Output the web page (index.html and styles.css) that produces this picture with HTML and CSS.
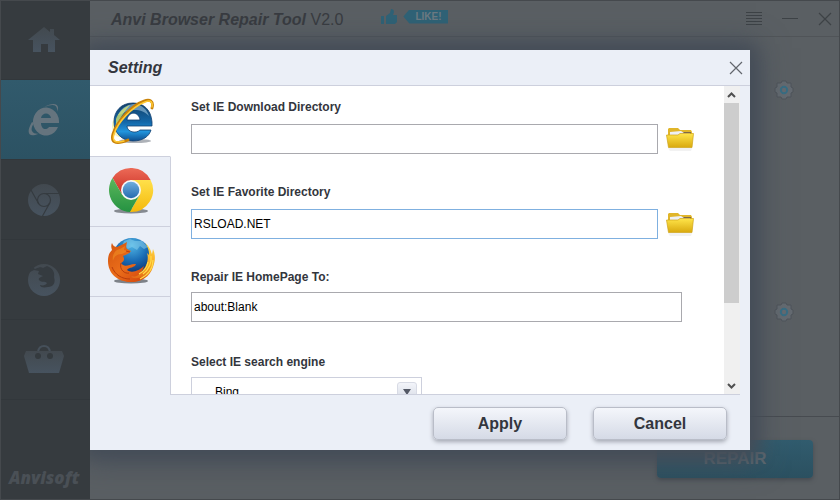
FILE: index.html
```html
<!DOCTYPE html>
<html lang="en">
<head>
<meta charset="utf-8">
<title>Anvi Browser Repair Tool</title>
<link rel="stylesheet" href="styles.css">
</head>
<body>
<div class="window">
  <nav class="sidebar" aria-label="Sections">
    <button class="nav-item" aria-label="Home">
      <svg width="34" height="28" viewBox="0 0 34 28"><path fill="url(#steel)" d="M17 1 1 14h5v12h8v-8h7v8h7V14h5l-6-5V3h-4v3z"/></svg>
    </button>
    <button class="nav-item nav-item-active" aria-label="Internet Explorer">
      <svg width="34" height="34" viewBox="0 0 34 34" fill="#65747e">
        <path fill-rule="evenodd" d="M32 20v-2A13 14 0 1 0 31 24H22C19 28 14 26 14 20ZM14 15C15 9 23 9 24 15Z"/>
        <path d="M30 9C34 0 26-1 17 4 27 0 31 2 30 9ZM5 19C-1 29 1 35 11 31 17 29 7 33 5 28 4 26 5 23 7 20Z"/>
      </svg>
    </button>
    <button class="nav-item" aria-label="Chrome">
      <svg width="34" height="34" viewBox="0 0 34 34"><circle cx="17" cy="17" r="16" fill="url(#steel)"/><g fill="none" stroke="#353b40" stroke-width="1.2"><circle cx="17" cy="17" r="6.5"/><path d="M17 10.500H32M11.400 20.200 4 7M22.600 20.200 15.500 33"/></g></svg>
    </button>
    <button class="nav-item" aria-label="Firefox">
      <svg width="34" height="34" viewBox="0 0 34 34"><circle cx="17" cy="17" r="16" fill="url(#steel)"/><path fill="#353b40" d="M4 3 8 6C12 4 15 4 16 5L20 3C26 5 28 10 27 14 29 20 26 24 21 24 16 25 13 24 13 22 16 23 19 22 20 20 18 18 15 20 12 17 11 15 14 14 16 13L11 11 12 8 7 7 3 9Z"/></svg>
    </button>
    <button class="nav-item" aria-label="Toolbox">
      <svg width="42" height="34" viewBox="0 0 42 34"><path fill="none" stroke="#46505a" stroke-width="2" d="M15 9C16 1 26 1 27 9"/><path fill="url(#steel)" d="M3 8H39L41 13 36 30H6L1 13Z"/><circle cx="15" cy="13" r="3" fill="#343a3e"/><circle cx="27" cy="13" r="3" fill="#343a3e"/></svg>
    </button>
    <div class="brand">Anvisoft</div>
  </nav>

  <main class="main">
    <header class="titlebar">
      <h1 class="app-name"><em>Anvi Browser Repair Tool</em> <span class="version">V2.0</span></h1>
      <a class="like" href="#like">
        <svg width="17" height="16" viewBox="0 0 17 16" fill="#2f6276"><path d="M0 7h3v8H0zM5 7 9 4 10 0C14 0 13 4 12 6H16V13L14 15H5Z"/></svg>
        <span class="like-tag">LIKE!</span>
      </a>
      <div class="window-controls">
        <button class="icon-button" aria-label="Menu"><svg width="16" height="14" viewBox="0 0 16 14" stroke="#3d4246"><path d="M0 .5H16M0 3.500H16M0 6.500H16M0 9.500H16M0 12.500H16"/></svg></button>
        <button class="icon-button" aria-label="Minimize"><svg width="16" height="14" viewBox="0 0 16 14" stroke="#3d4246"><path d="M0 6.500H16"/></svg></button>
        <button class="icon-button" aria-label="Close"><svg width="14" height="14" viewBox="0 0 14 14" stroke="#3d4246" stroke-width="1.200"><path d="M1 1 13 13M13 1 1 13"/></svg></button>
      </div>
    </header>
    <div class="sections">
      <section class="section"><button class="icon-button" aria-label="Repair options"><svg width="20" height="20" viewBox="0 0 20 20"><use href="#gear"/></svg></button></section>
      <section class="section"><button class="icon-button" aria-label="Setting options"><svg width="20" height="20" viewBox="0 0 20 20"><use href="#gear"/></svg></button></section>
    </div>
    <footer class="actions"><button class="repair">REPAIR</button></footer>
  </main>

  <div class="dialog" role="dialog" aria-labelledby="dialog-title">
    <header class="dialog-header">
      <h2 class="dialog-title" id="dialog-title">Setting</h2>
      <button class="icon-button" aria-label="Close settings"><svg width="14" height="14" viewBox="0 0 14 14" stroke="#62666d" stroke-width="1.200"><path d="M1 1 13 13M13 1 1 13"/></svg></button>
    </header>
    <div class="dialog-body">
      <div class="tabs" role="tablist">
        <button class="tab tab-active" role="tab" aria-selected="true" aria-label="Internet Explorer">
          <svg width="48" height="48" viewBox="0 0 48 48">
            <ellipse cx="27" cy="43" rx="16" ry="2" fill="#8b929a" opacity=".7"/>
            <ellipse cx="11" cy="28" rx="7" ry="11" fill="#f4ef8a" opacity=".6"/>
            <path fill="url(#ieblue)" stroke="#123f70" stroke-width=".8" fill-rule="evenodd" d="M44 28V24C43 11 35 5 25 5 13 5 6 13 6 24 6 35 14 43 25 43 34 43 41 39 43 32H32C28 36 19 34 19 28ZM19 22C20 13 31 13 32 22Z"/>
            <path fill="#b9dff5" opacity=".5" d="M10 17C14 8 22 6 27 6 35 7 39 12 41 18 35 12 30 12 25 12 18 12 14 17 10 17Z"/>
            <path fill="#dce96b" opacity=".75" d="M8 21C10 15 16 9 22 7 16 14 11 21 8 29Z"/>
            <path fill="none" stroke="#c98208" stroke-width="2.800" stroke-linecap="round" d="M44 10C46 3 42 1 36 3 24 7 9 23 5 36 3 43 6 48 20 42"/>
            <path fill="none" stroke="#ffc933" stroke-width="1.500" stroke-linecap="round" d="M44 9C45 3 42 2 37 4 24 9 10 24 6 36 4 42 6 46 16 43"/>
          </svg>
        </button>
        <button class="tab" role="tab" aria-selected="false" aria-label="Chrome">
          <svg width="48" height="48" viewBox="-24 -24 48 48">
            <ellipse cx="0" cy="21" rx="17" ry="2.500" fill="#6b7077" opacity=".8"/>
            <path fill="url(#cred)" d="M-18.460-11.970A22 22 0 0 1 19.600-10H0L-8.660 5Z"/>
            <path fill="url(#cyellow)" d="M19.600-10A22 22 0 0 1-1.140 21.970L8.660 5 0-10Z"/>
            <path fill="url(#cgreen)" d="M-1.140 21.970A22 22 0 0 1-18.460-11.970L-8.660 5H8.660Z"/>
            <circle r="10" fill="#f7f8f8"/><circle r="8.300" fill="url(#cblue)"/>
          </svg>
        </button>
        <button class="tab" role="tab" aria-selected="false" aria-label="Firefox">
          <svg width="48" height="48" viewBox="0 0 48 48">
            <ellipse cx="24" cy="45" rx="17" ry="2.500" fill="#62666d" opacity=".8"/>
            <circle cx="25" cy="21" r="19" fill="url(#globe)"/>
            <path fill="#8bd3ef" opacity=".5" d="M17 5 23 3 28 5 35 5 41 11 37 13 33 10 30 14 25 11 21 13 16 8Z"/>
            <path fill="url(#foxgold)" d="M38 7C44 12 44 16 45 18L46 13C49 20 48 26 46 31 43 41 34 46 24 46 18 46 13 43 10 38 20 43 29 41 34 36 40 31 42 23 40 17L42 19C42 14 41 11 38 7Z"/>
            <path fill="url(#fox)" d="M5 7C6 10 8 11 10 11 14 9 17 8 20 6 19 10 19 12 20 13L24 15C22 18 18 19 16 20 18 23 17 26 14 27 18 33 23 27 29 28 28 32 22 31 20 34 25 38 33 34 37 30 35 38 30 41 24 41 30 44 37 41 42 36 37 44 31 46 24 46 10 46 1 37 1 25 1 20 2 17 5 14 4 11 4 9 5 7Z"/>
            <path fill="#ffb02e" d="M10 14C14 13 16 11 18 10L17 14 21 15 15 18C9 18 7 21 6 25 5 20 7 16 10 14Z" opacity=".35"/>
            <path fill="none" stroke="#ffdc4a" stroke-width="1.200" d="M44 20C45 28 41 34 36 38M41 26C40 32 36 36 32 38M46 24C46 32 41 39 33 43"/>
            <path fill="none" stroke="#b83d0c" stroke-width="1" d="M14 27C12 34 18 38 22 37M19 15 23 16M5 31C8 39 15 43 23 43"/>
          </svg>
        </button>
      </div>
      <div class="pane">
        <form class="settings" id="settings">
          <div class="field">
            <label for="download">Set IE Download Directory</label>
            <div class="field-row">
              <input class="text-input" id="download" type="text">
              <button class="icon-button" type="button" aria-label="Browse download directory"><svg width="30" height="30" viewBox="0 0 30 30"><use href="#folder"/></svg></button>
            </div>
          </div>
          <div class="field">
            <label for="favorite">Set IE Favorite Directory</label>
            <div class="field-row">
              <input class="text-input text-input-current" id="favorite" type="text" value="RSLOAD.NET">
              <button class="icon-button" type="button" aria-label="Browse favorite directory"><svg width="30" height="30" viewBox="0 0 30 30"><use href="#folder"/></svg></button>
            </div>
          </div>
          <div class="field field-compact">
            <label for="homepage">Repair IE HomePage To:</label>
            <input class="text-input text-input-wide" id="homepage" type="text" value="about:Blank">
          </div>
          <div class="field field-compact">
            <label for="engine">Select IE search engine</label>
            <div class="select-box">
              <select id="engine"><option>Bing</option></select>
              <span class="select-arrow"></span>
            </div>
          </div>
        </form>
        <div class="scrollbar" aria-hidden="true">
          <svg width="15" height="17" viewBox="0 0 15 17"><path fill="none" stroke="#505050" stroke-width="2" d="M4 11 7.500 7.500 11 11"/></svg>
          <div class="scroll-thumb"></div>
          <svg width="15" height="17" viewBox="0 0 15 17"><path fill="none" stroke="#505050" stroke-width="2" d="M4 7 7.500 10.500 11 7"/></svg>
        </div>
      </div>
    </div>
    <footer class="dialog-footer">
      <button class="button" form="settings" type="button">Apply</button>
      <button class="button" type="button">Cancel</button>
    </footer>
  </div>
</div>

<svg class="defs" width="0" height="0" aria-hidden="true">
  <defs>
    <linearGradient id="steel" x2="0" y2="1"><stop stop-color="#42494f"/><stop offset="1" stop-color="#47535f"/></linearGradient>
    <linearGradient id="ieblue" x2="0" y2="1"><stop stop-color="#123f66"/><stop offset=".5" stop-color="#1467a8"/><stop offset=".75" stop-color="#2295dd"/><stop offset="1" stop-color="#0d4c8c"/></linearGradient>
    <linearGradient id="cred" x2="0" y2="1"><stop stop-color="#ec6a57"/><stop offset="1" stop-color="#ca2d22"/></linearGradient>
    <linearGradient id="cyellow" x2="0" y2="1"><stop stop-color="#ffe04a"/><stop offset="1" stop-color="#f4b90b"/></linearGradient>
    <linearGradient id="cgreen" x2="0" y2="1"><stop stop-color="#5bb75b"/><stop offset="1" stop-color="#259242"/></linearGradient>
    <linearGradient id="cblue" x2="0" y2="1"><stop stop-color="#70aede"/><stop offset="1" stop-color="#246baf"/></linearGradient>
    <radialGradient id="globe" cx=".5" cy=".2" r=".8"><stop stop-color="#4fb4e4"/><stop offset=".5" stop-color="#1b6db5"/><stop offset="1" stop-color="#0b2b69"/></radialGradient>
    <linearGradient id="fox" x2="1" y2="1"><stop stop-color="#d2540f"/><stop offset=".5" stop-color="#ea6d1a"/><stop offset="1" stop-color="#cf3f0b"/></linearGradient>
    <linearGradient id="foxgold" x2="0" y2="1"><stop stop-color="#ffdb48"/><stop offset=".6" stop-color="#f8a41e"/><stop offset="1" stop-color="#dc5614"/></linearGradient>
    <linearGradient id="gold" x2="0" y2="1"><stop stop-color="#ffe54a"/><stop offset="1" stop-color="#d9a90e"/></linearGradient>
    <g id="folder">
      <path fill="#e9e9e9" d="M3 24H27L26 27H5Z" opacity=".6"/>
      <path fill="#e0b52a" d="M3 5 4 4H13L15 6H26L27 8V17H3Z"/>
      <path fill="#7d6848" d="M5 8H26V13H5Z"/>
      <path fill="#eef0f4" d="M5 8 16 7 19 9H25V13H5Z"/>
      <path fill="url(#gold)" stroke="#cfa318" stroke-width=".7" d="M1.500 11H13L15 9.500H28.500L27 23.500H3.500Z"/>
    </g>
    <g id="gear">
      <path fill="#646a70" stroke="#4e545a" d="M8 1H12L13 3 17 3V7L19 8V12L17 13V17H13L12 19H8L7 17H3V13L1 12V8L3 7V3H7Z"/>
      <circle cx="10" cy="10" r="3.200" fill="none" stroke="#386d83" stroke-width="2"/>
    </g>
  </defs>
</svg>
</body>
</html>
```
FILE: styles.css
```css
* { box-sizing: border-box; }

body {
  margin: 0;
  font-family: "Liberation Sans", Arial, sans-serif;
  color: #33363d;
}

button {
  margin: 0;
  padding: 0;
  border: 0;
  background: none;
  font: inherit;
  color: inherit;
}

svg { display: block; flex: none; }
.defs { position: absolute; }
h1, h2 { margin: 0; font-size: 16px; line-height: 20px; }

.window {
  position: relative;
  display: flex;
  min-height: 100vh;
  border: 1px solid #45494d;
  background: #5a5f63;
  overflow: hidden;
}

.sidebar {
  position: relative;
  z-index: 2;
  display: flex;
  flex: none;
  flex-direction: column;
  width: 89px;
  background: #363b3f;
}

.nav-item {
  display: flex;
  align-items: center;
  justify-content: center;
  height: 80px;
  padding-right: 4px;
  border-bottom: 1px solid #32373b;
}

.nav-item:first-child { height: 79px; }
.nav-item-active { background: linear-gradient(#315a6c, #2c5263); }

.brand {
  margin: auto 0 10px 8px;
  font-family: "Open Sans", sans-serif;
  font-size: 17px;
  font-style: italic;
  font-weight: 800;
  line-height: 22px;
  color: #4a5056;
}

.main {
  display: flex;
  flex: 1;
  flex-direction: column;
}

.titlebar {
  display: flex;
  align-items: center;
  height: 36px;
  padding: 0 7px 0 21px;
  border-bottom: 1px solid #505458;
}

.app-name { margin-top: 2px; color: #383b40; }
.version { font-weight: 400; }

.like {
  display: flex;
  align-items: center;
  gap: 5px;
  margin: 0 auto 4px 38px;
  text-decoration: none;
}

.like-tag {
  padding: 0 7px 0 12px;
  background: #2f6276;
  clip-path: polygon(0 50%, 6px 0, 100% 0, 100% 100%, 6px 100%);
  font-size: 10px;
  font-weight: 700;
  line-height: 14px;
  color: #6c7a82;
}

.window-controls { display: flex; gap: 20px; }

.sections { flex: 1; }

.section {
  display: flex;
  align-items: flex-start;
  justify-content: flex-end;
  height: 222px;
  padding: 43px 45px 0;
}

.section + .section { height: auto; }

.actions {
  display: flex;
  justify-content: flex-end;
  height: 83px;
  padding: 23px 26px 0;
  border-top: 1px solid #474b50;
}

.repair {
  width: 156px;
  height: 38px;
  border-radius: 4px;
  background: linear-gradient(#315c6e, #2b5060);
  box-shadow: 0 2px 4px #454a50;
  font-size: 17px;
  font-weight: 700;
  color: #5e6a72;
}

.dialog {
  position: absolute;
  inset: 49px 89px;
  z-index: 1;
  display: flex;
  flex-direction: column;
  background: #ebeff7;
  box-shadow: 0 0 16px 6px #454d58, 0 4px 30px 6px #454d58;
}

.dialog-header {
  display: flex;
  align-items: center;
  justify-content: space-between;
  height: 36px;
  padding: 0 7px 0 18px;
  border-bottom: 1px solid #cdd0dd;
}

.dialog-title { font-style: italic; }

.dialog-body {
  display: flex;
  flex: 1;
  min-height: 0;
  padding-right: 10px;
}

.tabs {
  display: flex;
  flex: none;
  flex-direction: column;
  width: 81px;
}

.tabs::after {
  content: "";
  flex: 1;
  border-right: 1px solid #cdd0dd;
}

.tab {
  display: flex;
  align-items: center;
  justify-content: center;
  height: 70px;
  padding: 0 0 3px 2px;
  border-right: 1px solid #cdd0dd;
  border-bottom: 1px solid #cdd0dd;
}

.tab-active {
  height: 71px;
  padding: 2px 0 0 4px;
  border-right-color: #fff;
  background: #fff;
}

.pane {
  display: flex;
  flex: 1;
  min-width: 0;
  border-bottom: 1px solid #cdd0dd;
  background: #fff;
}

.settings {
  display: flex;
  flex: 1;
  flex-direction: column;
  gap: 30px;
  padding: 13px 42px 0 20px;
  overflow: hidden;
}

.field {
  display: flex;
  flex: none;
  flex-direction: column;
  gap: 9px;
  min-height: 55px;
}

.field-compact { gap: 7px; }

.field label {
  font-size: 12px;
  font-weight: 700;
  line-height: 16px;
}

.field-row {
  display: flex;
  gap: 7px;
  margin-right: -13px;
}

.text-input {
  flex: 1;
  min-width: 0;
  height: 30px;
  padding: 0 2px;
  border: 1px solid #a9a9ae;
  border-radius: 0;
  outline: 0;
  background: #fff;
  font: 12px "Liberation Sans", Arial, sans-serif;
  color: #000;
}

.text-input-wide { flex: none; }
.text-input-current { border-color: #7fb0e0; }

.select-box {
  position: relative;
  width: 231px;
}

.select-box select {
  width: 100%;
  height: 30px;
  padding: 0 23px;
  border: 1px solid #cdd0dd;
  border-radius: 0;
  background: #fff;
  appearance: none;
  font: 12px "Liberation Sans", Arial, sans-serif;
  color: #000;
}

.select-arrow {
  position: absolute;
  top: 5px;
  right: 5px;
  width: 20px;
  height: 20px;
  border: 1px solid #d8dbe5;
  border-radius: 3px;
  background: linear-gradient(#f3f5fa, #d5d9e4);
  pointer-events: none;
}

.select-arrow::after {
  content: "";
  display: block;
  margin: 6px 5px;
  border: 4px solid transparent;
  border-top: 6px solid #545966;
  border-bottom: 0;
}

.scrollbar {
  display: flex;
  flex: none;
  flex-direction: column;
  justify-content: space-between;
  width: 16px;
  background: #f0f0f0;
}

.scroll-thumb {
  width: 15px;
  height: 200px;
  margin-bottom: auto;
  background: #cdcdcd;
}

.dialog-footer {
  display: flex;
  justify-content: flex-end;
  gap: 26px;
  height: 55px;
  padding: 12px 23px 0;
}

.button {
  width: 134px;
  height: 33px;
  border: 1px solid #b9bdc8;
  border-radius: 5px;
  background: linear-gradient(#f4f6fb, #d5dae6);
  box-shadow: 0 2px 4px #a5a9b3;
  font-size: 16px;
  font-weight: 700;
}
```
